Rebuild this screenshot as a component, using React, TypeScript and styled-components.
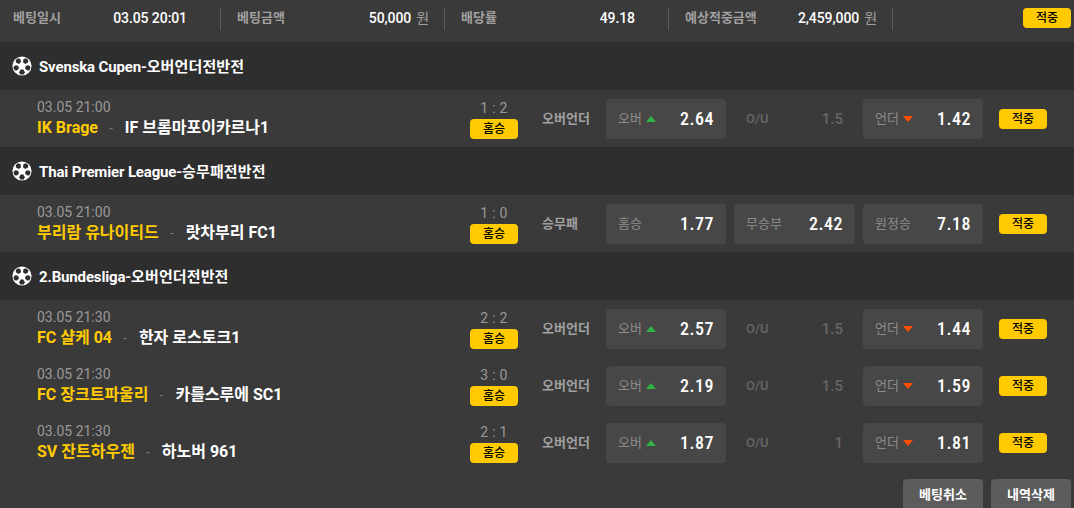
import styled, { createGlobalStyle } from 'styled-components';

type OddsType = {
  label: string;
  value: string;
  arrow?: 'up' | 'down';
  plain?: boolean;
};

type MatchType = {
  date: string;
  home: string;
  away: string;
  score: string;
  market: string;
  odds: OddsType[];
};

type LeagueType = {
  name: string;
  type: string;
  matches: MatchType[];
};

const overUnder = (over: string, line: string, under: string): OddsType[] => [
  { label: '오버', value: over, arrow: 'up' },
  { label: 'O/U', value: line, plain: true },
  { label: '언더', value: under, arrow: 'down' },
];

const summary = [
  { label: '베팅일시', value: '03.05 20:01' },
  { label: '베팅금액', value: '50,000', unit: '원' },
  { label: '배당률', value: '49.18' },
  { label: '예상적중금액', value: '2,459,000', unit: '원' },
];

const leagues: LeagueType[] = [
  {
    name: 'Svenska Cupen',
    type: '오버언더전반전',
    matches: [
      {
        date: '03.05 21:00',
        home: 'IK Brage',
        away: 'IF 브롬마포이카르나1',
        score: '1 : 2',
        market: '오버언더',
        odds: overUnder('2.64', '1.5', '1.42'),
      },
    ],
  },
  {
    name: 'Thai Premier League',
    type: '승무패전반전',
    matches: [
      {
        date: '03.05 21:00',
        home: '부리람 유나이티드',
        away: '랏차부리 FC1',
        score: '1 : 0',
        market: '승무패',
        odds: [
          { label: '홈승', value: '1.77' },
          { label: '무승부', value: '2.42' },
          { label: '원정승', value: '7.18' },
        ],
      },
    ],
  },
  {
    name: '2.Bundesliga',
    type: '오버언더전반전',
    matches: [
      {
        date: '03.05 21:30',
        home: 'FC 샬케 04',
        away: '한자 로스토크1',
        score: '2 : 2',
        market: '오버언더',
        odds: overUnder('2.57', '1.5', '1.44'),
      },
      {
        date: '03.05 21:30',
        home: 'FC 장크트파울리',
        away: '카를스루에 SC1',
        score: '3 : 0',
        market: '오버언더',
        odds: overUnder('2.19', '1.5', '1.59'),
      },
      {
        date: '03.05 21:30',
        home: 'SV 잔트하우젠',
        away: '하노버 961',
        score: '2 : 1',
        market: '오버언더',
        odds: overUnder('1.87', '1', '1.81'),
      },
    ],
  },
];

function SoccerBall() {
  return (
    <svg width="20" height="20" viewBox="-10 -10 20 20">
      <circle r="9.6" fill="#fff" />
      {[36, 108, 180, 252, 324].map((angle) => (
        <path
          key={angle}
          transform={`rotate(${angle}) translate(0 -5.9)`}
          d="M-1.4 2.3 L1.4 2.3 L2.8 -0.4 L1.7 -2.5 Q0 -2.9 -1.7 -2.5 L-2.8 -0.4 Z"
          fill="#2e2e2e"
        />
      ))}
    </svg>
  );
}

function MatchRow({ match }: { match: MatchType }) {
  return (
    <Row>
      <Teams>
        <MatchDate>{match.date}</MatchDate>
        <TeamNames>
          <Home>{match.home}</Home>
          <Dash>-</Dash>
          <Away>{match.away}</Away>
        </TeamNames>
      </Teams>
      <Result>
        <Score>{match.score}</Score>
        <Badge>홈승</Badge>
      </Result>
      <Market>{match.market}</Market>
      <OddsList>
        {match.odds.map((odd) => (
          <OddsBox key={odd.label} $plain={odd.plain}>
            <OddsLabel $plain={odd.plain}>
              {odd.label}
              {odd.arrow && <Arrow $dir={odd.arrow} />}
            </OddsLabel>
            {odd.plain ? <LineValue>{odd.value}</LineValue> : <OddsValue>{odd.value}</OddsValue>}
          </OddsBox>
        ))}
      </OddsList>
      <Badge>적중</Badge>
    </Row>
  );
}

function App() {
  return (
    <Container>
      <GlobalStyle />
      <Summary>
        {summary.map((item) => (
          <SummaryItem key={item.label}>
            <SummaryLabel>{item.label}</SummaryLabel>
            <SummaryValue>
              {item.value}
              {item.unit && <Unit>{item.unit}</Unit>}
            </SummaryValue>
          </SummaryItem>
        ))}
        <Badge>적중</Badge>
      </Summary>
      {leagues.map((league) => (
        <section key={league.name}>
          <LeagueTitle>
            <SoccerBall />
            <LeagueName>
              {league.name}-<LeagueKind>{league.type}</LeagueKind>
            </LeagueName>
          </LeagueTitle>
          {league.matches.map((match) => (
            <MatchRow key={match.home} match={match} />
          ))}
        </section>
      ))}
      <Footer>
        <FooterBtn>베팅취소</FooterBtn>
        <FooterBtn>내역삭제</FooterBtn>
      </Footer>
    </Container>
  );
}

export default App;

const GlobalStyle = createGlobalStyle`
  * {
    box-sizing: border-box;
  }

  body {
    margin: 0;
    background-color: #3a3a3a;
    font-family: Roboto, 'Noto Sans CJK KR', sans-serif;
    overflow: hidden;
  }
`;

const Container = styled.div`
  width: 1074px;
  height: 508px;
  overflow: hidden;
  background-color: #3a3a3a;
  white-space: nowrap;
`;

const Badge = styled.span`
  display: flex;
  align-items: center;
  justify-content: center;
  flex: none;
  width: 48px;
  height: 20px;
  border-radius: 4px;
  background-color: #ffcb00;
  color: #000;
  font-size: 12px;
  font-weight: 500;
  line-height: 20px;
`;

const Summary = styled.header`
  display: flex;
  align-items: flex-start;
  height: 42px;
  padding: 8px 3px 0 0;

  > ${Badge} {
    margin-left: auto;
  }
`;

const SummaryItem = styled.div`
  display: flex;
  align-items: center;
  justify-content: space-between;
  width: 224px;
  height: 22px;
  padding: 0 15px 2px 16px;
  border-right: 1px solid #5c5c5c;

  &:first-child {
    width: 221px;
    padding: 0 33px 2px 13px;
  }

  &:nth-child(3) {
    padding-right: 33px;
  }
`;

const SummaryLabel = styled.span`
  color: #a0a0a0;
  font-size: 13px;
  font-weight: 700;
  line-height: 20px;
`;

const SummaryValue = styled.span`
  color: #fff;
  font-size: 14px;
  font-weight: 500;
  line-height: 20px;
  letter-spacing: -0.08px;
`;

const Unit = styled.span`
  margin-left: 5px;
  color: #a0a0a0;
  font-size: 14px;
  font-weight: 400;
`;

const LeagueTitle = styled.h2`
  display: flex;
  align-items: center;
  gap: 7px;
  height: 48px;
  margin: 0;
  padding: 0 0 0 12px;
  background-color: #2e2e2e;
  color: #fff;
  font-size: 15px;
  font-weight: 700;
  line-height: 22px;
`;

const LeagueName = styled.span`
  padding-top: 2px;
  letter-spacing: -0.15px;
`;

const LeagueKind = styled.span`
  letter-spacing: 0.12px;
`;

const Row = styled.div`
  display: flex;
  align-items: center;
  height: 57px;
  padding-left: 37px;
`;

const Teams = styled.div`
  width: 433px;
  padding-bottom: 2px;
`;

const MatchDate = styled.div`
  height: 21px;
  color: #999;
  font-size: 14px;
  line-height: 20px;
`;

const TeamNames = styled.div`
  display: flex;
  align-items: center;
  height: 20px;
  font-size: 16px;
  font-weight: 700;
  line-height: 20px;
`;

const Home = styled.span`
  color: #ffcb00;
`;

const Dash = styled.span`
  margin: 0 12px 0 11px;
  color: #777;
  font-size: 14px;
  font-weight: 400;
`;

const Away = styled.span`
  color: #fff;
`;

const Result = styled.div`
  width: 48px;
  height: 41px;
`;

const Score = styled.div`
  height: 21px;
  color: #999;
  font-size: 14px;
  line-height: 20px;
  letter-spacing: 0.3px;
  text-align: center;
`;

const Market = styled.div`
  width: 88px;
  padding-left: 24px;
  color: #a0a0a0;
  font-size: 13px;
  font-weight: 700;
  line-height: 20px;
`;

const OddsList = styled.div`
  display: grid;
  grid-template-columns: 120px 121px 120px;
  gap: 8px;
  margin-right: 16px;
`;

const OddsBox = styled.div<{ $plain?: boolean }>`
  display: flex;
  align-items: center;
  justify-content: space-between;
  height: 40px;
  padding: 0 12px;
  border-radius: 4px;
  background-color: ${({ $plain }) => ($plain ? 'transparent' : '#474747')};
`;

const OddsLabel = styled.span<{ $plain?: boolean }>`
  display: flex;
  align-items: center;
  color: ${({ $plain }) => ($plain ? '#666' : '#8c8c8c')};
  font-size: 13px;
  font-weight: ${({ $plain }) => ($plain ? 500 : 400)};
  line-height: 20px;
`;

const Arrow = styled.i<{ $dir: 'up' | 'down' }>`
  margin-left: 4px;
  border: 5px solid transparent;
  ${({ $dir }) =>
    $dir === 'up'
      ? 'border-top: 0; border-bottom: 6px solid #2fb344;'
      : 'border-bottom: 0; border-top: 6px solid #ff4e00;'}
`;

const OddsValue = styled.span`
  color: #fff;
  font-size: 18px;
  font-weight: 500;
  font-stretch: 75%;
  letter-spacing: 0.5px;
`;

const LineValue = styled.span`
  color: #666;
  font-size: 15px;
  font-weight: 500;
`;

const Footer = styled.footer`
  display: flex;
  justify-content: flex-end;
  gap: 8px;
  padding: 8px 3px 0 0;
`;

const FooterBtn = styled.button`
  width: 80px;
  height: 32px;
  padding: 0 0 4px;
  border: 0;
  border-radius: 4px;
  background-color: #5c5c5c;
  color: #fff;
  font-family: inherit;
  font-size: 13px;
  font-weight: 700;
`;
